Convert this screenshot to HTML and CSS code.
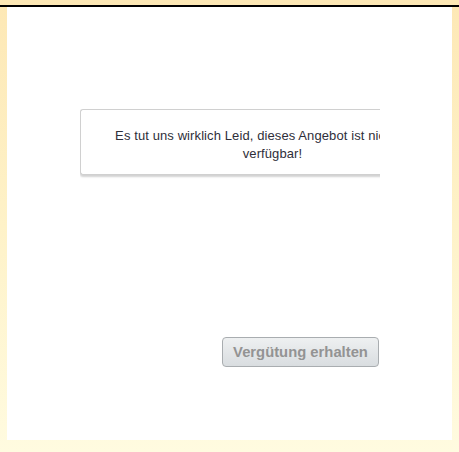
FILE: index.html
```html
<!DOCTYPE html>
<html>
<head>
<meta charset="utf-8">
<link rel="stylesheet" href="styles.css">
</head>
<body>
<div class="topbar"></div>
<div class="panel">
  <div class="content">
    <div class="message">Es tut uns wirklich Leid, dieses Angebot ist nicht mehr verfügbar!</div>
    <div class="actions">
      <button class="btn" disabled>Vergütung erhalten</button>
    </div>
  </div>
</div>
</body>
</html>
```

FILE: styles.css
```css
html, body {
  margin: 0;
  padding: 0;
}
body {
  width: 459px;
  height: 452px;
  overflow: hidden;
  background: linear-gradient(to bottom, #fde8b5 0%, #fef2c8 50%, #fffbe0 100%);
  font-family: "Liberation Sans", Arial, sans-serif;
}
.topbar {
  height: 5px;
  border-bottom: 2px solid #000;
}
.panel {
  margin: 0 7px;
  height: 433px;
  background: #fff;
  padding-left: 73px;
  box-sizing: border-box;
}
.content {
  width: 300px;
  padding-top: 102px;
  padding-bottom: 4px;
  overflow: hidden;
}
.message {
  width: 384px;
  box-sizing: border-box;
  border: 1px solid #d0d0d0;
  border-right: none;
  border-radius: 3px 0 0 3px;
  box-shadow: 0 2px 2px rgba(0,0,0,0.18);
  padding: 17px 20px 11px;
  text-align: center;
  font-size: 13px;
  letter-spacing: 0.1px;
  line-height: 18px;
  color: #2f2f3a;
  background: #fff;
}
.actions {
  display: flex;
  justify-content: flex-end;
  margin-top: 162px;
  padding-right: 1px;
}
.btn {
  width: 157px;
  height: 30px;
  border: 1px solid #a9adb0;
  border-radius: 4px;
  background: linear-gradient(to bottom, #eef0f1, #d9dde0);
  color: #939393;
  font-family: "Liberation Sans", Arial, sans-serif;
  font-weight: bold;
  font-size: 14.8px;
  padding: 0;
}
```
